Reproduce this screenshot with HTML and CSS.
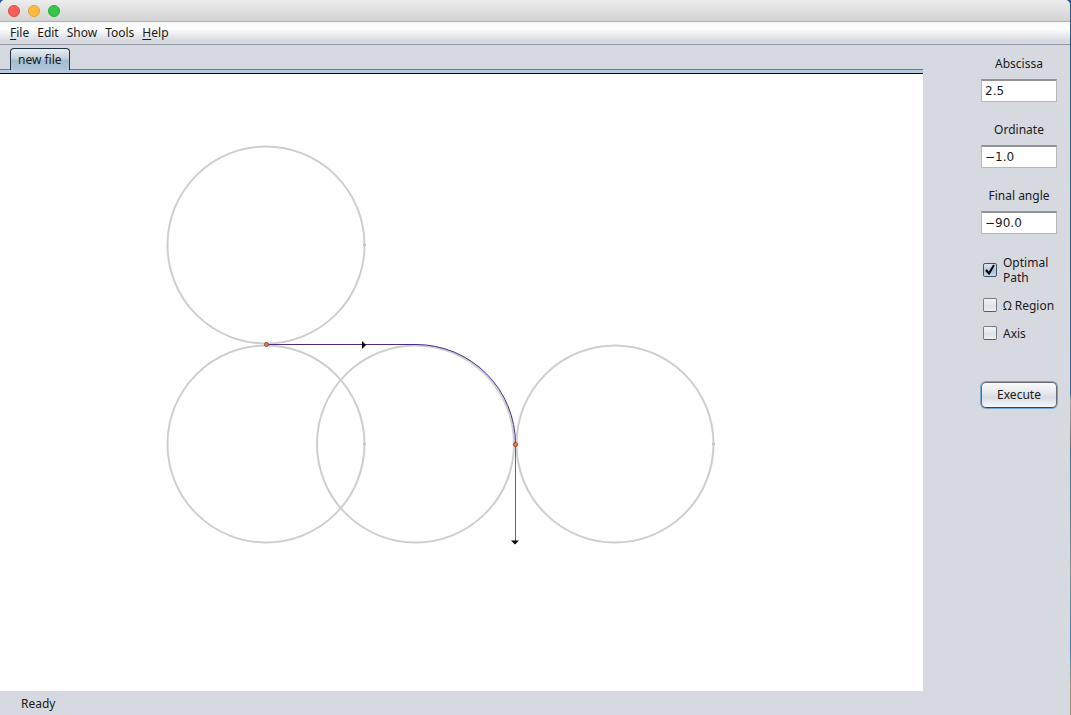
FILE: index.html
```html
<!DOCTYPE html>
<html lang="en">
<head>
<meta charset="utf-8">
<title>new file</title>
<link rel="stylesheet" href="styles.css">
</head>
<body>
<div class="window">
  <header class="titlebar">
    <button class="light close" aria-label="Close"></button>
    <button class="light minimize" aria-label="Minimize"></button>
    <button class="light expand" aria-label="Zoom"></button>
  </header>
  <nav class="menubar">
    <button class="menu"><u>F</u>ile</button>
    <button class="menu">Edit</button>
    <button class="menu">Show</button>
    <button class="menu">Tools</button>
    <button class="menu"><u>H</u>elp</button>
  </nav>
  <div class="body">
    <main class="document">
      <div class="tabs"><button class="tab">new file</button></div>
      <div class="tab-edge"></div>
      <div class="canvas">
        <svg class="plot" width="923" height="617" viewBox="0 74 923 617">
          <g fill="none" stroke="#cecece" stroke-width="2">
            <circle cx="266" cy="245" r="98.5"/>
            <circle cx="266" cy="444" r="98.5"/>
            <circle cx="415.500" cy="444" r="98.5"/>
            <circle cx="615" cy="444" r="98.5"/>
          </g>
          <g fill="#c4c4c4">
            <rect x="363" y="244" width="3" height="2"/>
            <rect x="363" y="443" width="3" height="2"/>
            <rect x="712" y="443" width="3" height="2"/>
          </g>
          <path d="M266 344.500H416A99.500 99.500 0 0 1 515.500 444" fill="none" stroke="#4b2a86"/>
          <path d="M515.500 444V541" stroke="#666"/>
          <path d="M362 341L366 345L362 349Z"/>
          <path d="M511 540.500H519L515 544.500Z"/>
          <circle cx="266.500" cy="344.500" r="2" fill="#f37a43" stroke="#8d4a32"/>
          <circle cx="515.500" cy="444.500" r="2" fill="#f37a43" stroke="#8d4a32"/>
        </svg>
      </div>
      <footer class="status">Ready</footer>
    </main>
    <aside class="sidebar">
      <form class="form">
        <div class="field"><label for="abscissa">Abscissa</label><input class="text" id="abscissa" type="text" value="2.5"></div>
        <div class="field"><label for="ordinate">Ordinate</label><input class="text" id="ordinate" type="text" value="−1.0"></div>
        <div class="field"><label for="angle">Final angle</label><input class="text" id="angle" type="text" value="−90.0"></div>
        <div class="options">
          <div class="option">
            <span class="box"><input class="check" id="optimal" type="checkbox" checked><svg class="tick" width="14" height="14" viewBox="0 0 14 14"><path d="M3 7L6 10.500L11 2" fill="none" stroke="#000" stroke-width="2"/></svg></span>
            <label for="optimal">Optimal<br>Path</label>
          </div>
          <div class="option"><span class="box"><input class="check" id="region" type="checkbox"></span><label for="region">Ω Region</label></div>
          <div class="option"><span class="box"><input class="check" id="axis" type="checkbox"></span><label for="axis">Axis</label></div>
        </div>
        <button class="execute" type="button">Execute</button>
      </form>
    </aside>
  </div>
</div>
</body>
</html>
```
FILE: styles.css
```css
* { box-sizing: border-box; }
body {
  margin: 0;
  background: linear-gradient(#2b5590 0, #3a689f 55%, #a5a6a6 56%, #777 62%, #3d6d89 63%, #83908f 80%, #3389ad 90%, #9a9180 96%);
  color: #1a1a1a;
  font: 12px/16px "Noto Sans", "Open Sans", sans-serif;
}
button, input { font: inherit; color: inherit; margin: 0; }
.window {
  display: flex;
  flex-direction: column;
  height: 100vh;
  margin-right: 1px;
  background: #d6d9e0;
  border-radius: 5px 5px 0 0;
  overflow: hidden;
}
.titlebar {
  display: flex;
  align-items: center;
  gap: 8px;
  height: 22px;
  padding-left: 8px;
  background: linear-gradient(#ececec, #d3d3d3);
  border-bottom: 1px solid #b1b1b1;
}
.light { width: 12px; height: 12px; padding: 0; border: 1px solid; border-radius: 50%; }
.close { background: #fc605b; border-color: #e2473f; }
.minimize { background: #fdbc40; border-color: #df9f31; }
.expand { background: #34c84a; border-color: #27aa35; }
.menubar {
  display: flex;
  align-items: center;
  gap: 8px;
  height: 23px;
  padding-left: 10px;
  background: linear-gradient(#f7f8f8, #fff 30%, #d6d9e0 85%);
  border-bottom: 1px solid #9297a1;
}
.menu { padding: 0; border: 0; background: none; }
.menu u { text-underline-offset: 2px; }
.body { display: flex; flex: 1; min-height: 0; }
.document { display: flex; flex: 1; flex-direction: column; min-width: 0; }
.tabs { display: flex; padding: 3px 10px 0; }
.tab {
  position: relative;
  z-index: 1;
  height: 22px;
  padding: 0 7px;
  border: 1px solid #1e3445;
  border-bottom: 0;
  border-radius: 4px 4px 0 0;
  background: linear-gradient(#e9eef3, #c3d0dc 45%, #a6bccf 55%, #b0c7db);
}
.tab-edge {
  height: 5px;
  margin-top: -1px;
  background: #b5cbe3;
  border-top: 1px solid #647d94;
  border-bottom: 1px solid #000018;
}
.canvas { flex: 1; min-height: 0; overflow: hidden; background: #fff; }
.plot { display: block; }
.status { height: 24px; padding: 5px 21px 3px; }
.sidebar { width: 147px; padding: 11px 13px 0 58px; }
.form { display: flex; flex-direction: column; }
.field { display: flex; flex-direction: column; align-items: center; gap: 7px; margin-bottom: 20px; }
.text {
  width: 100%;
  height: 23px;
  padding: 0 3px 1px;
  border: 1px solid #b5b7bb;
  border-top: 2px solid #919396;
  border-radius: 0;
  background: #fff;
  font-family: "DejaVu Sans", sans-serif;
}
.options { display: flex; flex-direction: column; gap: 12px; padding: 1px 0 0 2px; }
.option { display: flex; align-items: center; gap: 6px; line-height: 15px; min-height: 16px; white-space: nowrap; }
.box { display: grid; }
.box > * { grid-area: 1 / 1; }
.check {
  width: 14px;
  height: 14px;
  appearance: none;
  border: 1px solid #777c84;
  border-bottom-color: #555961;
  border-radius: 2px;
  background: linear-gradient(#f4f5f7, #dfe1e6 60%, #f0f1f4);
}
.check:checked { border-color: #405467; background: linear-gradient(#dce6ef, #a9bfd3 60%, #cbdceb); }
.tick { pointer-events: none; }
.execute {
  height: 26px;
  margin-top: 41px;
  padding: 0;
  border: 1px solid #666a73;
  border-bottom-color: #3d4047;
  border-radius: 5px;
  background: linear-gradient(#fafafb, #e4e6ea 45%, #d8dbe1 60%, #f7f9ff);
  box-shadow: 0 0 0 1px #79a5d1;
}
```
